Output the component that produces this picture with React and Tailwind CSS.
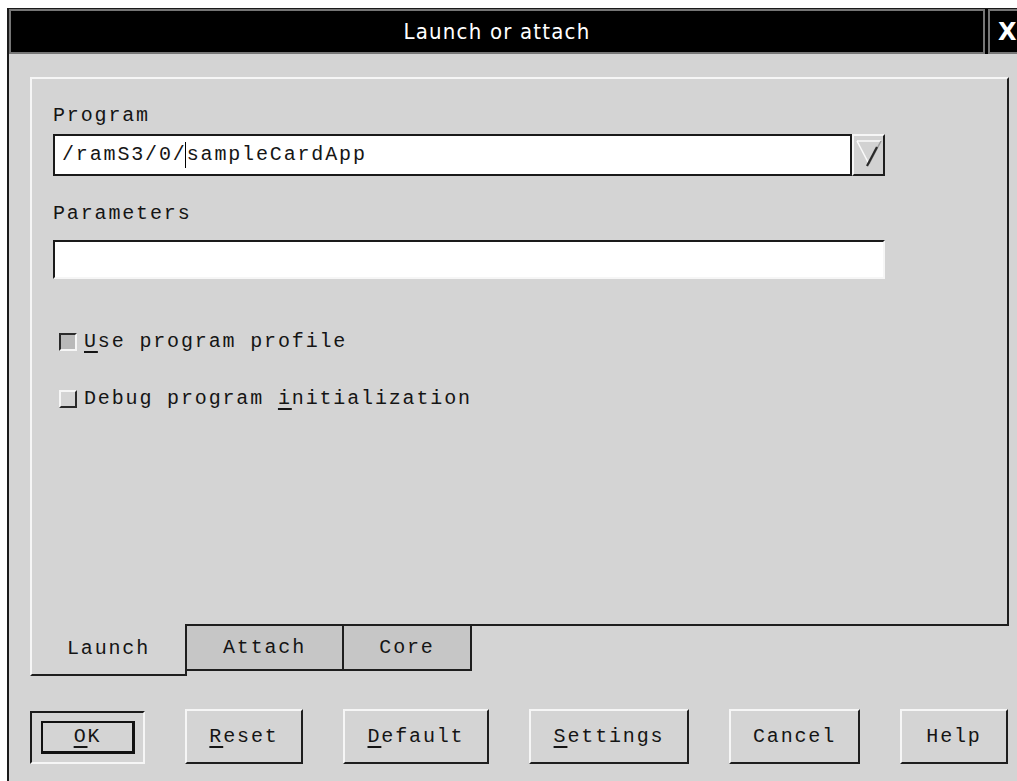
import React from 'react';

const mono = "font-['Liberation_Mono','DejaVu_Sans_Mono',monospace] text-[20px] tracking-[1.85px] text-[#151515]";

// Raised 3D bevel used by push buttons and the combo arrow
const raised = 'border-2 border-t-[#f6f6f6] border-l-[#f6f6f6] border-b-[#1e1e1e] border-r-[#1e1e1e]';

function Mnemonic({ children }) {
  return <span className="underline decoration-[2px] underline-offset-[4px]">{children}</span>;
}

function PushButton({ width, children }) {
  return (
    <button className={`${raised} ${width} h-[55px] bg-[#d4d4d4] flex items-center justify-center ${mono}`}>
      {children}
    </button>
  );
}

function Toggle({ checked, children }) {
  return (
    <div className="flex items-center h-[20px] gap-[7px]">
      <div
        className={
          checked
            ? 'w-[18px] h-[18px] border-2 border-t-[#2a2a2a] border-l-[#2a2a2a] border-b-[#f6f6f6] border-r-[#f6f6f6] bg-[#b9b9b9]'
            : 'w-[18px] h-[18px] border-2 border-t-[#f6f6f6] border-l-[#f6f6f6] border-b-[#2a2a2a] border-r-[#2a2a2a] bg-[#d4d4d4]'
        }
      />
      <span className={mono}>{children}</span>
    </div>
  );
}

function ComboArrow() {
  return (
    <div className={`${raised} w-[33px] h-[42px] bg-[#d2d2d2] flex items-center justify-center`}>
      <svg width="29" height="38" viewBox="0 0 29 38">
        <path d="M3 5 L27 5" stroke="#fbfbfb" strokeWidth="1.5" />
        <path d="M3 5 L15 28" stroke="#fbfbfb" strokeWidth="1.5" />
        <path d="M27 5 L15 28" stroke="#9a9a9a" strokeWidth="1.5" />
        <path d="M13 30 L23 11" stroke="#2a2a2a" strokeWidth="2.2" />
      </svg>
    </div>
  );
}

export default function App() {
  return (
    <div className="w-[1017px] h-[781px] overflow-hidden bg-white pl-[7px] pt-[8px]">
      <div className="w-[1040px] h-[800px] border-l-2 border-t border-[#1a1a1a] bg-[#d4d4d4] flex flex-col">
        {/* title bar + close box */}
        <div className="h-[45px] flex bg-black">
          <div className="w-[976px] border-2 border-[#767676] flex items-center justify-center">
            <span className="font-['DejaVu_Sans_Condensed','DejaVu_Sans',sans-serif] text-[22px] tracking-[1.2px] text-white">
              Launch or attach
            </span>
          </div>
          <div className="w-[45px] ml-[3px] border-2 border-[#767676] flex items-center pl-[8px]">
            <span className="font-['DejaVu_Sans',sans-serif] font-bold text-[24px] leading-none text-white">X</span>
          </div>
        </div>

        <div className="pl-[21px] pt-[23px]">
          {/* notebook page */}
          <div className="w-[979px] h-[547px] border-t-2 border-l-2 border-r-2 border-t-[#f6f6f6] border-l-[#f6f6f6] border-r-[#1e1e1e] pl-[21px] pt-[27px]">
            <div className={`${mono} h-[20px] leading-[20px]`}>Program</div>
            <div className="flex mt-[8px]">
              <div className={`w-[799px] h-[42px] border-2 border-[#1a1a1a] bg-white flex items-center pl-[7px] ${mono}`}>
                <span>/ramS3/0/</span>
                <span className="inline-block w-[1px] h-[26px] bg-black -ml-[2px] mr-[1px]" />
                <span>sampleCardApp</span>
              </div>
              <ComboArrow />
            </div>

            <div className={`${mono} h-[20px] leading-[20px] mt-[28px]`}>Parameters</div>
            <div className="w-[832px] h-[39px] mt-[16px] border-2 border-t-[#1a1a1a] border-l-[#1a1a1a] border-b-[#f6f6f6] border-r-[#f6f6f6] bg-white" />

            <div className="mt-[53px] ml-[6px]">
              <Toggle checked>
                <Mnemonic>U</Mnemonic>se program profile
              </Toggle>
            </div>
            <div className="mt-[37px] ml-[6px]">
              <Toggle>
                Debug program <Mnemonic>i</Mnemonic>nitialization
              </Toggle>
            </div>
          </div>

          {/* tabs */}
          <div className="w-[979px] flex items-start">
            <div className={`w-[157px] h-[52px] border-l-2 border-b-2 border-r-2 border-l-[#f6f6f6] border-b-[#1e1e1e] border-r-[#1e1e1e] flex items-center justify-center ${mono}`}>
              Launch
            </div>
            <div className={`w-[157px] h-[47px] border-t-2 border-r-2 border-b-2 border-[#1e1e1e] bg-[#c6c6c6] flex items-center justify-center ${mono}`}>
              Attach
            </div>
            <div className={`w-[128px] h-[47px] border-t-2 border-r-2 border-b-2 border-[#1e1e1e] bg-[#c6c6c6] flex items-center justify-center ${mono}`}>
              Core
            </div>
            <div className="flex-1 border-t-2 border-[#1e1e1e]" />
          </div>

          {/* dialog buttons */}
          <div className="flex items-start gap-[40px] mt-[33px]">
            <div className="w-[115px] h-[53px] mt-[2px] border-2 border-t-[#1a1a1a] border-l-[#1a1a1a] border-b-[#f6f6f6] border-r-[#f6f6f6] pl-[9px] pt-[8px]">
              <button className={`w-[94px] h-[33px] border-2 border-b-[3px] border-r-[3px] border-[#111] bg-[#d4d4d4] flex items-center justify-center ${mono}`}>
                <Mnemonic>O</Mnemonic>K
              </button>
            </div>
            <PushButton width="w-[118px]">
              <Mnemonic>R</Mnemonic>eset
            </PushButton>
            <PushButton width="w-[146px]">
              <Mnemonic>D</Mnemonic>efault
            </PushButton>
            <PushButton width="w-[160px]">
              <Mnemonic>S</Mnemonic>ettings
            </PushButton>
            <PushButton width="w-[131px]">Cancel</PushButton>
            <PushButton width="w-[108px]">Help</PushButton>
          </div>
        </div>
      </div>
    </div>
  );
}
